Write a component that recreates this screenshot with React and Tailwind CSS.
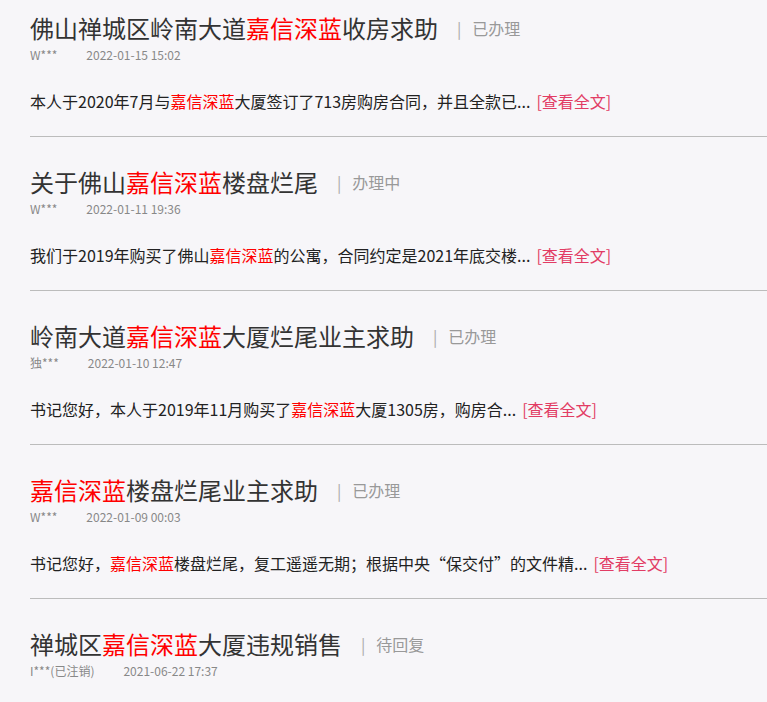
const items = [
  {
    title: ['佛山禅城区岭南大道', '嘉信深蓝', '收房求助'],
    status: '已办理',
    user: 'W***',
    date: '2022-01-15 15:02',
    body: ['本人于2020年7月与', '嘉信深蓝', '大厦签订了713房购房合同，并且全款已...'],
  },
  {
    title: ['关于佛山', '嘉信深蓝', '楼盘烂尾'],
    status: '办理中',
    user: 'W***',
    date: '2022-01-11 19:36',
    body: ['我们于2019年购买了佛山', '嘉信深蓝', '的公寓，合同约定是2021年底交楼...'],
  },
  {
    title: ['岭南大道', '嘉信深蓝', '大厦烂尾业主求助'],
    status: '已办理',
    user: '独***',
    date: '2022-01-10 12:47',
    body: ['书记您好，本人于2019年11月购买了', '嘉信深蓝', '大厦1305房，购房合...'],
  },
  {
    title: ['', '嘉信深蓝', '楼盘烂尾业主求助'],
    status: '已办理',
    user: 'W***',
    date: '2022-01-09 00:03',
    body: ['书记您好，', '嘉信深蓝', '楼盘烂尾，复工遥遥无期；根据中央“保交付”的文件精...'],
  },
  {
    title: ['禅城区', '嘉信深蓝', '大厦违规销售'],
    status: '待回复',
    user: 'I***(已注销)',
    date: '2021-06-22 17:37',
    body: null,
  },
];

export default function App() {
  return (
    <div className="min-h-[702px] bg-[#f7f6f9] pl-[30px] font-['Noto_Sans_CJK_SC','Noto_Sans',sans-serif] overflow-hidden">
      {items.map((it, i) => (
        <div key={i} className={`${i === 0 ? 'pt-[13px]' : 'pt-[30px]'} ${it.body ? 'border-b border-[#bcbcbc] pb-[23px]' : ''}`}>
          {/* 标题行 */}
          <div className="flex items-center h-[30px] whitespace-nowrap">
            <span className="text-[24px] leading-[30px] text-[#333]">
              {it.title[0]}
              <span className="text-[#f00]">{it.title[1]}</span>
              {it.title[2]}
            </span>
            <span className="ml-[19px] text-[16px] text-[#aaa]">|</span>
            <span className="ml-[11px] text-[16px] text-[#999]">{it.status}</span>
          </div>
          <div className="mt-[2px] flex text-[12px] leading-[20px] text-[#888]">
            <span className="mr-[29px]">{it.user}</span>
            <span>{it.date}</span>
          </div>
          {it.body && (
            <div className="mt-[24px] text-[16px] leading-[24px] text-[#222] whitespace-nowrap">
              {it.body[0]}
              <span className="text-[#f00]">{it.body[1]}</span>
              {it.body[2]}
              <span className="ml-[6px] text-[#e23c64]">[查看全文]</span>
            </div>
          )}
        </div>
      ))}
    </div>
  );
}
